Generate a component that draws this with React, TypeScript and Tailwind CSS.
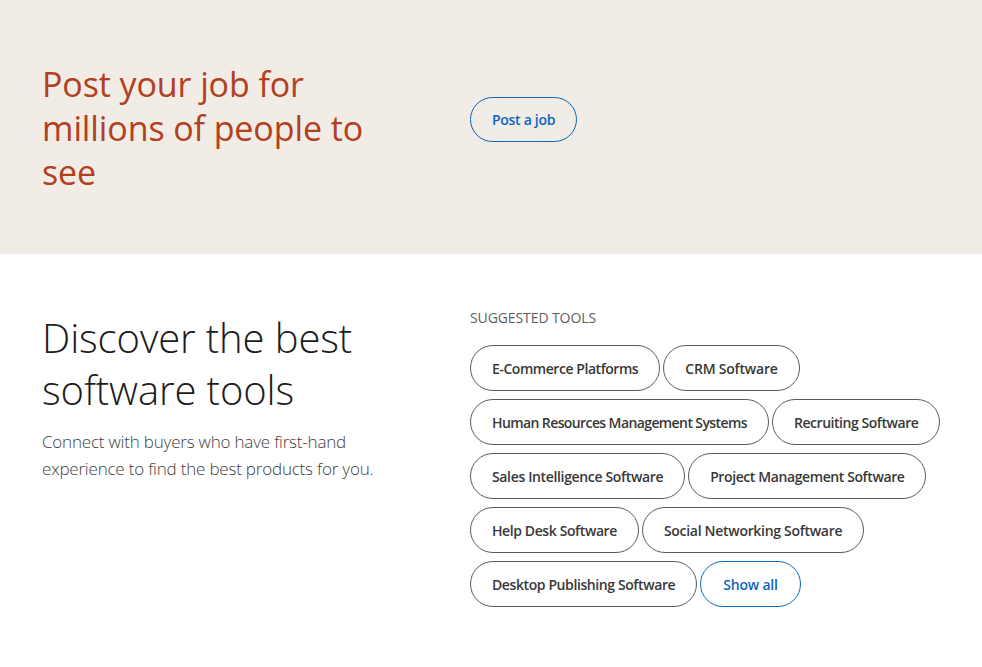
import React from "react";

const tools: { t: string; c: string }[] = [
  { t: "E-Commerce Platforms", c: "tracking-[-0.45px]" },
  { t: "CRM Software", c: "tracking-[-0.2px]" },
  { t: "Human Resources Management Systems", c: "tracking-[-0.6px]" },
  { t: "Recruiting Software", c: "tracking-[-0.45px]" },
  { t: "Sales Intelligence Software", c: "tracking-[-0.35px]" },
  { t: "Project Management Software", c: "tracking-[-0.4px]" },
  { t: "Help Desk Software", c: "tracking-[-0.4px]" },
  { t: "Social Networking Software", c: "tracking-[-0.3px]" },
  { t: "Desktop Publishing Software", c: "tracking-[-0.4px]" },
];

export default function App() {
  return (
    <div
      className="min-h-[667px] w-full bg-white"
      style={{ fontFamily: '"Open Sans", "Noto Sans", Arial, sans-serif' }}
    >
      <section className="h-[254px] bg-[#f1ece6] flex pl-[42px] pt-[62px]">
        <h2 className="w-[428px] text-[34px] leading-[44px] font-normal text-[#b24020] tracking-[-0.1px]">
          Post your job for
          <br />
          millions of people to
          <br />
          see
        </h2>
        <div className="pt-[35px]">
          <button className="h-[45px] px-[21px] rounded-full border border-[#0a66c2] text-[#0a66c2] text-[14px] font-semibold tracking-[-0.3px] bg-transparent">
            Post a job
          </button>
        </div>
      </section>
      <section className="flex pl-[42px] pt-[58px] pb-[40px]">
        <div className="w-[428px]">
          <h2 className="text-[40px] leading-[52px] font-light text-[#1c1c1c] tracking-[-0.1px]">
            Discover the best
            <br />
            software tools
          </h2>
          <p className="mt-[12px] text-[17px] leading-[27px] font-light text-[#404040] tracking-[-0.2px]">
            Connect with buyers who have first-hand
            <br />
            experience to find the best products for you.
          </p>
        </div>
        <div className="w-[500px]">
          <h3 className="-mt-[4px] text-[14px] leading-[20px] font-normal text-[#5e5e5e] uppercase tracking-[-0.1px]">
            Suggested tools
          </h3>
          <div className="mt-[17px] flex flex-wrap gap-x-[3px] gap-y-[8px] w-[480px]">
            {tools.map(({ t, c }) => (
              <button
                key={t}
                className={`h-[46px] px-[21px] rounded-full border border-[#5b5b5b] text-[#383838] text-[14px] font-semibold bg-white whitespace-nowrap ${c}`}
              >
                {t}
              </button>
            ))}
            <button className="h-[46px] px-[22px] rounded-full border border-[#0a66c2] text-[#0a66c2] text-[14px] font-semibold tracking-[-0.2px] bg-white">
              Show all
            </button>
          </div>
        </div>
      </section>
    </div>
  );
}
